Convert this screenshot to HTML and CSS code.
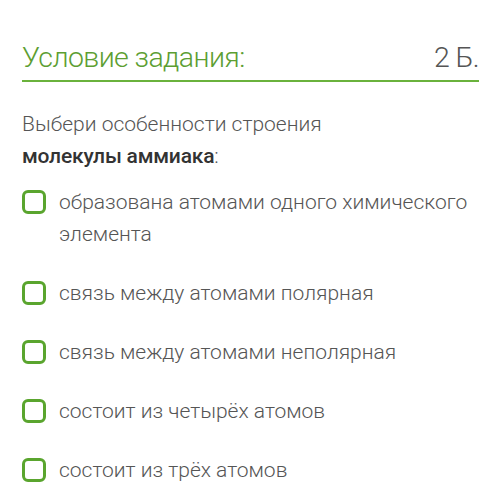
FILE: index.html
```html
<!DOCTYPE html>
<html lang="ru">
<head>
<meta charset="utf-8">
<link rel="stylesheet" href="styles.css">
</head>
<body>
<div class="page">
  <div class="header">
    <span class="title">Условие задания:</span>
    <span class="points">2 Б.</span>
  </div>
  <p class="question">Выбери особенности строения<br><span class="strong">молекулы аммиака</span>:</p>
  <ul class="options">
    <li class="option"><span class="box"></span><span class="label">образована атомами одного химического элемента</span></li>
    <li class="option"><span class="box"></span><span class="label">связь между атомами полярная</span></li>
    <li class="option"><span class="box"></span><span class="label">связь между атомами неполярная</span></li>
    <li class="option"><span class="box"></span><span class="label">состоит из четырёх атомов</span></li>
    <li class="option"><span class="box"></span><span class="label">состоит из трёх атомов</span></li>
  </ul>
</div>
</body>
</html>
```
FILE: styles.css
```css
html, body {
  margin: 0;
  padding: 0;
  background: #fff;
}
.page {
  font-family: Roboto, "Noto Sans", sans-serif;
  font-weight: 300;
  color: #555;
  padding: 41px 21px 0 22px;
}
.header {
  display: flex;
  justify-content: space-between;
  align-items: baseline;
  border-bottom: 2px solid #6ab23c;
  padding-bottom: 6px;
}
.title {
  color: #5c9e32;
  font-size: 28.5px;
  letter-spacing: -0.6px;
  line-height: 33px;
}
.points {
  color: #555;
  font-size: 28.5px;
  letter-spacing: -0.6px;
  line-height: 33px;
}
.question {
  margin: 26px 0 0 0;
  font-size: 21px;
  line-height: 32px;
  color: #555;
}
.strong {
  font-weight: 500;
  color: #333;
  letter-spacing: -0.2px;
}
.options {
  list-style: none;
  margin: 14px 0 0 0;
  padding: 0;
  display: flex;
  flex-direction: column;
  gap: 27px;
}
.option {
  display: flex;
  align-items: flex-start;
  gap: 13px;
}
.box {
  flex: none;
  width: 18px;
  height: 18px;
  border: 3px solid #5aa52e;
  border-radius: 6px;
  margin-top: 4px;
}
.label {
  font-size: 21px;
  line-height: 32px;
  color: #555;
}
```
